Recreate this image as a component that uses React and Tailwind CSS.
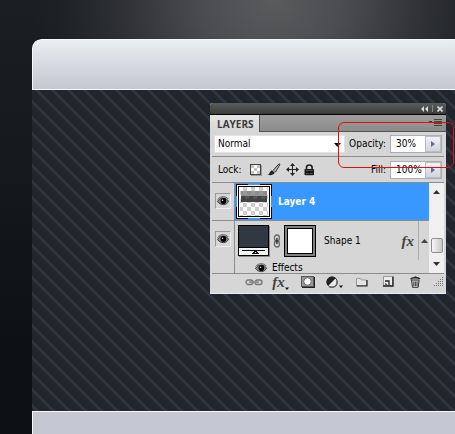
import { useState } from 'react';

const layerTools = [
  { name: 'Link layers', icon: <ChainIcon /> },
  { name: 'Add a layer style', icon: <FxMark menu /> },
  { name: 'Add layer mask', icon: <MaskIcon /> },
  { name: 'New adjustment layer', icon: <AdjustmentIcon /> },
  { name: 'New group', icon: <FolderIcon /> },
  { name: 'New layer', icon: <NewLayerIcon /> },
  { name: 'Delete layer', icon: <TrashIcon /> },
];

const lockTools = [
  { name: 'Lock transparent pixels', icon: <CheckerIcon /> },
  { name: 'Lock image pixels', icon: <BrushIcon /> },
  { name: 'Lock position', icon: <MoveIcon /> },
  { name: 'Lock all', icon: <PadlockIcon /> },
];

function EyeIcon() {
  return (
    <svg width="12" height="10" viewBox="0 0 12 10" fill="none">
      <path d="M0.5 5.5C2 2.8 4 2 6.3 2c2.200 0 4 1.200 5.200 3.200C10.400 7.500 8.600 8.600 6.300 8.600 4 8.600 2 7.600 0.500 5.500z" fill="#8f8f8f" stroke="#333" strokeWidth="0.9" />
      <path d="M0.600 3.600C2.500 1.200 4.300 0.700 6.300 0.700c2.100 0 3.800 0.800 5 2.300" stroke="#555" strokeWidth="0.9" />
      <circle cx="6.400" cy="5" r="2.900" fill="#000" />
      <circle cx="5.500" cy="4.200" r="0.800" fill="#ddd" />
    </svg>
  );
}

function CheckerIcon() {
  return (
    <svg width="12" height="12" viewBox="0 0 12 12" shapeRendering="crispEdges">
      <rect x="1" y="1" width="11" height="11" fill="#9a9a9a" />
      <rect width="11" height="11" fill="#444" />
      <rect x="1" y="1" width="9" height="9" fill="#fff" />
      <path d="M1 1h3v3h-3zM7 1h3v3h-3zM4 4h3v3h-3zM1 7h3v3h-3zM7 7h3v3h-3z" fill="#c4c4c4" />
    </svg>
  );
}

function BrushIcon() {
  return (
    <svg width="14" height="13" viewBox="0 0 14 13">
      <path d="M6 7.500L12 0.800 13 1.500 8.500 9z" fill="#bbb" stroke="#222" strokeWidth="0.900" />
      <path d="M0.500 11.800c2.200-0.200 2-4 4.800-4.600 1.900 0 3 1.300 2.300 2.900C6.600 12.300 3 12.600 0.500 11.800z" fill="#222" />
      <path d="M5.200 6.800l2.800 2.600" stroke="#eee" strokeWidth="0.900" />
    </svg>
  );
}

function MoveIcon() {
  return (
    <svg width="13" height="13" viewBox="0 0 13 13">
      <path d="M6.500 1v11M1 6.500h11" stroke="#222" />
      <path d="M6.500 0l2.500 3h-5zM6.500 13l2.500-3h-5zM0 6.500l3-2.500v5zM13 6.500l-3-2.500v5z" fill="#222" />
    </svg>
  );
}

function PadlockIcon() {
  return (
    <svg width="11" height="12" viewBox="0 0 11 12">
      <path d="M2.500 5.500V3.500a2.800 2.500 0 0 1 5.600 0v2" fill="none" stroke="#222" strokeWidth="1.600" />
      <rect x="0.500" y="5" width="9.500" height="6.200" rx="0.800" fill="#1c1c1c" />
      <path d="M2 6.500h6.500M2 9.500h6.500" stroke="#666" strokeWidth="0.700" />
      <path d="M5.300 7v2.500" stroke="#000" strokeWidth="1.200" />
    </svg>
  );
}

function ChainIcon() {
  return (
    <svg width="18" height="8" viewBox="0 0 18 8" fill="none">
      <rect x="1" y="2" width="7" height="4.500" rx="2.200" stroke="#777" strokeWidth="1.300" />
      <rect x="10" y="2" width="7" height="4.500" rx="2.200" stroke="#777" strokeWidth="1.300" />
      <path d="M4.500 4.200h9" stroke="#555" strokeWidth="1.800" />
      <path d="M5 4h8" stroke="#eee" strokeWidth="0.700" />
    </svg>
  );
}

function MaskLinkIcon() {
  return (
    <svg width="8" height="14" viewBox="0 0 8 14" fill="none" className="shrink-0">
      <rect x="1.500" y="1" width="4.800" height="6" rx="2.300" stroke="#666" strokeWidth="1.300" />
      <rect x="1.500" y="7" width="4.800" height="6" rx="2.300" stroke="#666" strokeWidth="1.300" />
      <path d="M3.900 4v6" stroke="#222" strokeWidth="1.300" />
    </svg>
  );
}

function FxMark({ menu }) {
  return (
    <span className="flex items-end text-[#444]">
      <span className="font-['Liberation_Serif',serif] text-[15px] leading-4 font-bold italic">fx</span>
      {menu && <DownTick />}
    </span>
  );
}

function DownTick() {
  return (
    <svg width="4" height="3" viewBox="0 0 4 3" className="shrink-0">
      <path d="M0 0.500h4L2 3z" fill="#111" />
    </svg>
  );
}

function MaskIcon() {
  return (
    <svg width="14" height="12" viewBox="0 0 14 12">
      <path d="M1 1h13v11H1z" fill="#222" />
      <path d="M0 0h13v11H0z" fill="#555" />
      <path d="M1 1h11v9H1z" fill="#999" />
      <circle cx="6.500" cy="5.500" r="3.700" fill="#fff" stroke="#444" strokeWidth="0.700" />
    </svg>
  );
}

function AdjustmentIcon() {
  return (
    <span className="flex items-end">
      <svg width="13" height="12" viewBox="0 0 13 12">
        <circle cx="6" cy="6" r="5.200" fill="#e8e8e8" stroke="#333" />
        <path d="M2.200 9.800A5.300 5.300 0 0 1 9.800 2.200z" fill="#222" />
        <path d="M3 10.500a5.200 5.200 0 0 0 8-5.500" fill="none" stroke="#666" strokeWidth="1.400" />
      </svg>
      <DownTick />
    </span>
  );
}

function FolderIcon() {
  return (
    <svg width="12" height="10" viewBox="0 0 12 10">
      <path d="M0.500 8.500v-7h4l1 1.500h5v5.500z" fill="#e3e3e3" stroke="#999" />
      <path d="M0.500 9h10.500V3" fill="none" stroke="#222" strokeWidth="1.200" />
    </svg>
  );
}

function NewLayerIcon() {
  return (
    <svg width="11" height="11" viewBox="0 0 11 11">
      <path d="M0.500 0.500h9v9h-9z" fill="#eee" stroke="#999" />
      <path d="M0 10h10V0.500" fill="none" stroke="#222" strokeWidth="1.400" />
      <path d="M2 5h4v4" fill="none" stroke="#222" strokeWidth="1.300" />
      <path d="M2 6.500v3h3z" fill="#555" />
    </svg>
  );
}

function TrashIcon() {
  return (
    <svg width="11" height="12" viewBox="0 0 11 12" fill="none">
      <path d="M1.500 4h7.500l-0.800 7.300H2.500z" fill="#ccc" stroke="#333" />
      <path d="M0.500 3.300C2 1.500 8 1.200 10 3" stroke="#222" strokeWidth="1.500" />
      <path d="M4 1.500c0.500-1.200 2.500-1.200 3 0" stroke="#333" />
      <path d="M3.800 5.500v4.500M5.400 5.500v4.500M7 5.500v4.500" stroke="#333" strokeWidth="0.900" />
    </svg>
  );
}

function GripIcon() {
  const dots = [];
  for (let row = 0; row < 5; row++) {
    for (let col = 4 - row; col < 5; col++) {
      dots.push(<rect key={`${row}-${col}`} x={col * 2} y={row * 2} width="1" height="1" />);
    }
  }
  return (
    <svg width="10" height="10" viewBox="0 0 10 10" fill="#777" shapeRendering="crispEdges" className="ml-auto">
      {dots}
    </svg>
  );
}

function LayerThumb() {
  return (
    <svg width="36" height="35" viewBox="0 0 36 35" shapeRendering="crispEdges" className="shrink-0">
      <defs>
        <pattern id="checks" x="3" y="3" width="8" height="8" patternUnits="userSpaceOnUse">
          <rect width="8" height="8" fill="#fff" />
          <path d="M4 0h4v4h-4zM0 4h4v4h-4z" fill="#ccc" />
        </pattern>
      </defs>
      <path d="M0 0h12v2h-12zM24 0h12v2h-12zM0 33h12v2h-12zM24 33h12v2h-12zM0 0h1v12h-1zM35 0h1v12h-1zM0 23h1v12h-1zM35 23h1v12h-1z" fill="#000" />
      <rect x="1" y="1" width="34" height="33" fill="#fff" />
      <rect x="2" y="2" width="32" height="31" fill="#000" />
      <rect x="3" y="3" width="30" height="29" fill="#fff" />
      <rect x="4" y="3" width="28" height="29" fill="url(#checks)" />
      <rect x="5" y="7" width="26" height="5" fill="#777" fillOpacity="0.750" />
      <rect x="5" y="12" width="26" height="6" fill="#333" fillOpacity="0.900" />
      <path d="M9 12h4v3h-4zM17 12h4v3h-4zM25 12h4v3h-4z" fill="#555" />
    </svg>
  );
}

function ShapeThumb() {
  return (
    <svg width="32" height="32" viewBox="0 0 32 32" shapeRendering="crispEdges" className="shrink-0">
      <rect x="1" y="1" width="31" height="31" fill="#8a8a8a" />
      <rect width="31" height="31" fill="#000" />
      <rect x="1" y="1" width="29" height="21" fill="#303841" />
      <rect x="1" y="23" width="29" height="7" fill="#f2f5f0" />
      <path d="M4 25.500h23" stroke="#000" />
      <path d="M15 28.500h5l-2.500-2.500z" fill="#fff" stroke="#000" />
    </svg>
  );
}

function PercentField({ id, label, initial }) {
  const [value, setValue] = useState(initial);

  return (
    <div className="ml-auto flex items-center gap-1">
      <label htmlFor={id}>{label}</label>
      <div className="flex h-[18px] w-[52px] border border-[#a9adb8] bg-white">
        <input
          id={id}
          value={value}
          onChange={(e) => setValue(e.target.value)}
          className="w-0 flex-1 bg-white pl-[5px] outline-none"
        />
        <button
          type="button"
          aria-label={`${label} slider`}
          className="flex w-4 items-center justify-center border border-[#b9bdc8] bg-linear-to-b from-[#f2f2f2] to-[#d2d4d8]"
        >
          <svg width="4" height="6" viewBox="0 0 4 6">
            <path d="M0 0l4 3-4 3z" fill="#5a68ac" />
          </svg>
        </button>
      </div>
    </div>
  );
}

function VisibilityCell({ name }) {
  return (
    <div className="flex w-[23px] shrink-0 justify-center border-r border-[#8c8c8c] pt-[10px]">
      <button
        type="button"
        aria-label={`Toggle ${name}`}
        className="flex size-4 items-center justify-center border border-t-[#999] border-r-[#eee] border-b-[#eee] border-l-[#999]"
      >
        <EyeIcon />
      </button>
    </div>
  );
}

function Scrollbar() {
  return (
    <div className="flex w-[15px] shrink-0 flex-col items-center bg-[#f0f0f0] py-[7px]">
      <svg width="7" height="4" viewBox="0 0 7 4">
        <path d="M0 4h7L3.500 0z" fill="#333" />
      </svg>
      <div className="mt-11 h-[15px] w-3 rounded-[2px] border border-[#8e8e8e] bg-linear-to-r from-[#f6f6f6] to-[#c8c8c8]" />
      <svg width="7" height="4" viewBox="0 0 7 4" className="mt-auto">
        <path d="M0 0h7L3.500 4z" fill="#333" />
      </svg>
    </div>
  );
}

function LayerList() {
  return (
    <div className="mx-[2px] flex h-[92px] border-y border-[#8c8c8c]">
      <ul className="min-w-0 flex-1 overflow-hidden">
        <li className="flex h-[38px] border-b border-[#8c8c8c]">
          <VisibilityCell name="Layer 4" />
          <div className="flex flex-1 items-center gap-[6px] bg-[#3898ff] pl-px font-bold text-white">
            <LayerThumb />
            Layer 4
          </div>
        </li>
        <li className="flex h-[39px]">
          <VisibilityCell name="Shape 1" />
          <div className="flex flex-1 items-center pl-[3px]">
            <ShapeThumb />
            <span className="mx-[3px]">
              <MaskLinkIcon />
            </span>
            <span className="size-8 border border-black bg-[#808080] p-[2px]">
              <span className="block size-full border border-black bg-white" />
            </span>
            <span className="ml-2">Shape 1</span>
            <span className="ml-auto">
              <FxMark />
            </span>
            <button
              type="button"
              aria-label="Collapse effects"
              className="ml-1 flex h-full w-[11px] items-center justify-center border-l border-[#aaa]"
            >
              <svg width="7" height="4" viewBox="0 0 7 4">
                <path d="M0 4h7L3.500 0z" fill="#444" />
              </svg>
            </button>
          </div>
        </li>
        <li className="flex h-[13px]">
          <div className="w-[23px] border-r border-[#8c8c8c]" />
          <div className="flex items-center gap-[5px] pt-[3px] pl-5">
            <EyeIcon />
            Effects
          </div>
        </li>
      </ul>
      <Scrollbar />
    </div>
  );
}

function LayersPanel() {
  const [mode, setMode] = useState('Normal');

  return (
    <section className="relative ml-auto w-[236px] rounded-t-[3px] bg-[#d6d6d6] font-['DejaVu_Sans_Condensed','Noto_Sans',sans-serif] text-[10px] leading-3 text-black">
      <div className="flex h-3 items-center justify-end gap-1 rounded-t-[3px] border-b border-black bg-linear-to-b from-[#5c5c5c] to-[#3c3c3c] pr-[3px]">
        <button type="button" aria-label="Collapse panel">
          <svg width="7" height="6" viewBox="0 0 7 6" className="block">
            <path d="M3 0v6L0 3zM7 0v6L4 3z" fill="#ddd" />
          </svg>
        </button>
        <span className="h-[7px] w-px bg-[#888]" />
        <button type="button" aria-label="Close panel">
          <svg width="6" height="6" viewBox="0 0 6 6" className="block">
            <path d="M0.500 0.500l5 5M5.500 0.500l-5 5" stroke="#ddd" strokeWidth="1.600" />
          </svg>
        </button>
      </div>

      <div className="flex h-[17px] items-stretch bg-linear-to-b from-[#9e9e9e] to-[#8a8a8a]">
        <h2 className="flex w-[49px] items-center bg-linear-to-b from-[#e4e4e4] to-[#d6d6d6] pl-[7px] font-['Open_Sans',sans-serif] font-bold text-[#3c3c3c]">
          LAYERS
        </h2>
        <div className="flex flex-1 items-center justify-end border-b border-l border-[#555] pr-1">
          <button type="button" aria-label="Panel menu">
            <svg width="13" height="8" viewBox="0 0 13 8" className="block" shapeRendering="crispEdges">
              <path d="M0 2h3L1.500 4z" fill="#333" />
              <path d="M5 0.500h8M5 2.500h8M5 4.500h8M5 6.500h8" stroke="#444" />
            </svg>
          </button>
        </div>
      </div>

      <div className="mx-[2px] flex h-[25px] items-center border-b border-[#8c8c8c] px-[2px]">
        <div className="relative">
          <select
            aria-label="Blend mode"
            value={mode}
            onChange={(e) => setMode(e.target.value)}
            className="block h-[18px] w-[131px] appearance-none border border-[#e2e2e2] bg-white pl-[3px] outline-none"
          >
            <option>Normal</option>
            <option>Multiply</option>
            <option>Screen</option>
          </select>
          <svg width="7" height="4" viewBox="0 0 7 4" className="pointer-events-none absolute top-2 right-1">
            <path d="M0 0h7L3.500 4z" fill="#000" />
          </svg>
        </div>
        <PercentField id="opacity" label="Opacity:" initial="30%" />
      </div>

      <div className="mx-[2px] flex h-[25px] items-center px-[2px]">
        <span className="pl-1">Lock:</span>
        <div className="ml-2 flex items-center gap-[5px]">
          {lockTools.map((tool) => (
            <button key={tool.name} type="button" aria-label={tool.name}>
              {tool.icon}
            </button>
          ))}
        </div>
        <PercentField id="fill" label="Fill:" initial="100%" />
      </div>

      <LayerList />

      <div className="flex h-5 items-center border-b border-[#eee] pr-[2px] pb-1 pl-[30px]">
        {layerTools.map((tool) => (
          <button
            key={tool.name}
            type="button"
            aria-label={tool.name}
            className="flex w-[27px] items-center justify-center"
          >
            {tool.icon}
          </button>
        ))}
        <GripIcon />
      </div>

      {/* Callout around the opacity control */}
      <div className="pointer-events-none absolute top-[19px] -right-2 h-[46px] w-[116px] rounded-md border border-[#e80c0c]" />
    </section>
  );
}

export default function App() {
  return (
    <main className="flex min-h-screen flex-col overflow-hidden bg-[#0f1318] bg-[radial-gradient(ellipse_240px_220px_at_60%_0,#5a5b5d_0%,#4b4c4f_30%,#313336_60%,#1d2024_90%,#1d202400_100%),linear-gradient(to_bottom,#1b1e22,#15191d_40%,#0d1116_80%)] pt-[39px] pl-8">
      <div className="flex flex-1 flex-col overflow-hidden rounded-tl-[9px]">
        <header className="h-[51px] rounded-tl-[9px] border-y border-l border-[#f6f8fa] bg-linear-to-b from-[#eaeff2] via-[#d5d9e1] to-[#c5c8d2]" />
        <div className="bg-[#21262d] bg-[linear-gradient(45deg,transparent_7%,#303641_9%,#303641_19%,transparent_21%,transparent_57%,#303641_59%,#303641_69%,transparent_71%)] bg-size-[16px_16px] pt-[13px] pr-[9px] pb-[117px]">
          <LayersPanel />
        </div>
        <footer className="min-h-[23px] flex-1 border-t border-l border-[#f6f8fa] bg-[#c5c8d2]" />
      </div>
    </main>
  );
}
